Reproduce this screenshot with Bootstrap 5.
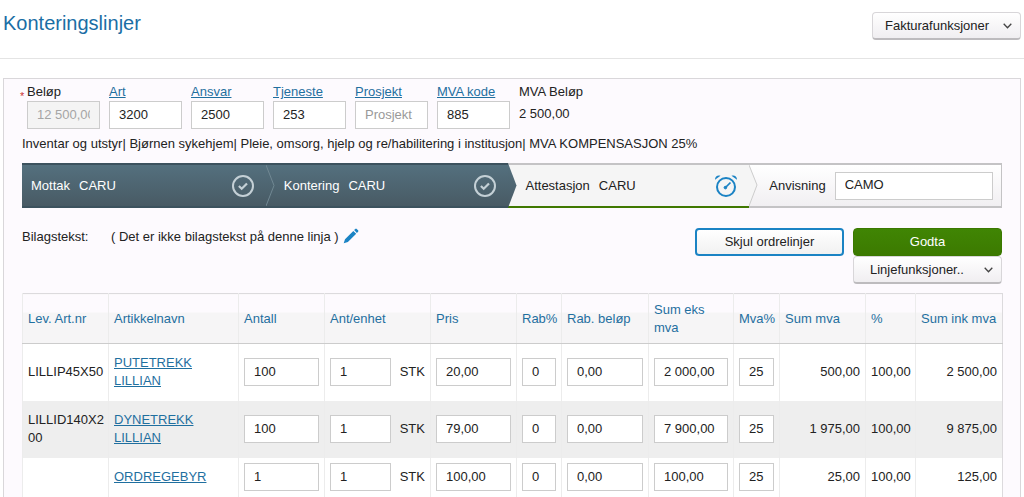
<!DOCTYPE html>
<html lang="no">
<head>
<meta charset="utf-8">
<meta name="viewport" content="width=device-width, initial-scale=1">
<title>Konteringslinjer</title>
<link href="https://cdn.jsdelivr.net/npm/bootstrap@5.3.0/dist/css/bootstrap.min.css" rel="stylesheet">
<style>
  body { font-family: "Liberation Sans", Arial, sans-serif; font-size: 13px; line-height: 18px; color: #222; background: #fff; }
  a { color: #1f6f9f; }
  .page-head { height: 59px; padding: 12px 3px 0; border-bottom: 1px solid #e4e4e4; }
  .page-title { font-size: 20px; line-height: 22px; color: #1a6ea5; font-weight: 400; }
  .panel { margin: 19px 3px 0; padding: 4px 18px 0; background: #fdfafe; border: 1px solid #d9d7da; border-bottom: 0; }
  .fields { padding-left: 5px; column-gap: 9px; }
  .field { width: 73px; }
  .field label, .caption { display: block; line-height: 18px; white-space: nowrap; }
  .form-control { font-size: 13px; line-height: 18px; height: 28px; padding: 3px 9px 5px; border-radius: 0; border-color: #ccc; color: #222; background: #fff; }
  .form-control:disabled { background: #f4f4f4; color: #a5a5a5; }
  .form-control::placeholder { color: #999; }
  .required { left: -7px; top: 4px; font-size: 11px; color: #c33; }
  .codes { margin-top: 6px; }
  .btn { font-size: 13px; line-height: 18px; height: 28px; padding: 3px 12px; border-radius: 4px; color: #222; }
  .btn-menu { width: 149px; padding-right: 8px; background: linear-gradient(#fff, #f0eef1); border: 1px solid #d8d6d9; border-bottom: 2px solid #bdbbbe; }
  .btn-toggle { width: 149px; background: linear-gradient(#fff, #f1f1f1); border: 2px solid #1b83c4; }
  .btn-accept { width: 149px; background: linear-gradient(#408504, #3c7a00); border: 1px solid #3b7800; color: #fff; }
  .steps { grid-template-columns: 244fr 242fr 242fr 252fr; height: 45px; margin-top: 10px; border: 1px solid #c4c3c5; border-width: 2px 1px 2px 0; background: linear-gradient(#fff, #f1eff2); }
  .step { gap: 9px; padding: 0 12px 0 18px; margin: -2px 0; min-width: 0; }
  .step:first-child { padding-left: 9px; }
  .step:last-child { padding: 0 8px 0 20px; }
  .step-done { color: #fff; background: linear-gradient(#54707e, #485a64); border: 1px solid #3c525e; border-width: 2px 0; }
  .step-now { background: #f5f5f5; border-top: 2px solid #c4c3c5; border-bottom: 2px solid #3f7800; }
  .tip { left: 100%; top: -2px; width: 9px; height: 45px; z-index: 1; }
  .step-now .tip { height: 43px; }
  .step-icon { width: 22px; height: 22px; }
  .actions { margin-top: 20px; }
  .note-label { width: 89px; }
  .side { margin-left: 9px; }
  .lines { table-layout: fixed; margin-top: 9px; border: 1px solid #dcdadd; background: #fff; }
  .lines th, .lines td { padding: 0 5px; border-left: 1px solid #ececec; vertical-align: middle; }
  .lines td:first-child { padding-right: 3px; word-break: break-all; }
  .lines th { height: 50px; font-weight: 400; color: #1f6f9f; border-bottom: 1px solid #ccc; background: linear-gradient(#fdfafe 36%, #f6f5f6 36%); }
  .lines td { height: 40px; }
  .lines .tall td { height: 57px; }
  .lines .shaded td { background: #eee; }
  .unit { gap: 9px; }
  .number { text-align: right; white-space: nowrap; }
</style>
</head>
<body>
<header class="page-head d-flex justify-content-between align-items-start">
  <h1 class="page-title m-0">Konteringslinjer</h1>
  <button type="button" class="btn btn-menu d-flex align-items-center justify-content-between">Fakturafunksjoner
    <svg width="9" height="6" viewBox="0 0 9 6" fill="none" stroke="#444" stroke-width="1.3" aria-hidden="true"><path d="M.7.8 4.5 4.8 8.3.8"/></svg></button>
</header>

<main class="panel">
  <form class="d-flex fields">
    <div class="field position-relative"><span class="required position-absolute" aria-hidden="true">*</span><label for="amount">Beløp</label><input class="form-control" id="amount" value="12 500,00" disabled></div>
    <div class="field"><label for="art"><a href="#art">Art</a></label><input class="form-control" id="art" value="3200"></div>
    <div class="field"><label for="ansvar"><a href="#ansvar">Ansvar</a></label><input class="form-control" id="ansvar" value="2500"></div>
    <div class="field"><label for="tjeneste"><a href="#tjeneste">Tjeneste</a></label><input class="form-control" id="tjeneste" value="253"></div>
    <div class="field"><label for="prosjekt"><a href="#prosjekt">Prosjekt</a></label><input class="form-control" id="prosjekt" placeholder="Prosjekt"></div>
    <div class="field"><label for="mvakode"><a href="#mvakode">MVA kode</a></label><input class="form-control" id="mvakode" value="885"></div>
    <div class="field"><span class="caption">MVA Beløp</span><div class="pt-1">2 500,00</div></div>
  </form>
  <div class="codes">Inventar og utstyr| Bjørnen sykehjem| Pleie, omsorg, hjelp og re/habilitering i institusjon| MVA KOMPENSASJON 25%</div>

  <div class="steps d-grid">
    <div class="step step-done position-relative d-flex align-items-center"><span>Mottak</span><span>CARU</span>
      <svg class="step-icon ms-auto" viewBox="0 0 22 22" fill="none" stroke="#c4d0d6" stroke-width="2" aria-hidden="true"><circle cx="11" cy="11" r="10"/><path d="m6.900 11 2.800 2.800 5.300-5.300" stroke-width="2.2"/></svg>
      <svg class="tip position-absolute" viewBox="0 0 9 45" aria-hidden="true"><path d="M0 2 8 22.500 0 43" fill="none" stroke="#718893"/></svg></div>
    <div class="step step-done position-relative d-flex align-items-center"><span>Kontering</span><span>CARU</span>
      <svg class="step-icon ms-auto" viewBox="0 0 22 22" fill="none" stroke="#c4d0d6" stroke-width="2" aria-hidden="true"><circle cx="11" cy="11" r="10"/><path d="m6.900 11 2.800 2.800 5.300-5.300" stroke-width="2.2"/></svg>
      <svg class="tip position-absolute" viewBox="0 0 9 45" aria-hidden="true"><defs><linearGradient id="slate" x2="0" y2="1"><stop stop-color="#54707e"/><stop offset="1" stop-color="#485a64"/></linearGradient></defs><path d="M0 0 8.500 22.500 0 45z" fill="url(#slate)"/></svg></div>
    <div class="step step-now position-relative d-flex align-items-center"><span>Attestasjon</span><span>CARU</span>
      <svg class="step-icon ms-auto" viewBox="0 0 22 22" fill="none" stroke="#1b83c4" stroke-width="2" aria-hidden="true"><circle cx="11" cy="12" r="9"/><path d="m10.500 12.500 5-5" stroke-width="1.700"/><circle cx="10.400" cy="12.600" r="1.300" fill="#1b83c4" stroke-width="1"/><path d="M0 4.800C-.2 1.800 2.500-.4 5.500.8zM22 4.800C22.200 1.800 19.500-.4 16.500.8z" fill="#1b83c4" stroke="none"/></svg>
      <svg class="tip position-absolute" viewBox="0 0 9 43" aria-hidden="true"><path d="M0 2 8 22 0 43z" fill="#f5f5f5"/><path d="M0 2 8 22 0 43" fill="none" stroke="#ccc"/></svg></div>
    <div class="step d-flex align-items-center"><label for="anvisning">Anvisning</label><input class="form-control" id="anvisning" value="CAMO"></div>
  </div>

  <div class="d-flex align-items-start actions">
    <span class="caption note-label">Bilagstekst:</span>
    <span class="caption">( Det er ikke bilagstekst på denne linja )</span>
    <a href="#bilagstekst" class="d-flex ms-1" aria-label="Rediger bilagstekst"><svg width="16" height="16" viewBox="0 0 16 16" fill="#1b83c4" aria-hidden="true"><path d="M.7 15.300 2 11.200 10.300 2.900 13.200 5.800 4.900 14zM11.100 2.100 12.300.9q.7-.6 1.400 0l1.400 1.400q.6.700 0 1.400L13.900 5z"/></svg></a>
    <button type="button" class="btn btn-toggle ms-auto">Skjul ordrelinjer</button>
    <div class="d-flex flex-column side">
      <button type="button" class="btn btn-accept">Godta</button>
      <button type="button" class="btn btn-menu d-flex align-items-center justify-content-between"><span class="ps-1">Linjefunksjoner..</span>
        <svg width="9" height="6" viewBox="0 0 9 6" fill="none" stroke="#444" stroke-width="1.3" aria-hidden="true"><path d="M.7.8 4.500 4.800 8.300.8"/></svg></button>
    </div>
  </div>

  <table class="lines w-100">
    <colgroup><col width="86"><col width="130"><col width="86"><col width="106"><col width="86"><col width="45"><col width="87"><col width="85"><col width="46"><col width="86"><col width="50"><col width="87"></colgroup>
    <thead><tr><th>Lev. Art.nr</th><th>Artikkelnavn</th><th>Antall</th><th>Ant/enhet</th><th>Pris</th><th>Rab%</th><th>Rab. beløp</th><th>Sum eks mva</th><th>Mva%</th><th>Sum mva</th><th>%</th><th class="text-nowrap">Sum ink mva</th></tr></thead>
    <tbody>
      <tr class="tall"><td>LILLIP45X50</td><td><a href="#1">PUTETREKK<br>LILLIAN</a></td>
        <td><input class="form-control" aria-label="Antall" value="100"></td>
        <td><div class="d-flex align-items-center unit"><input class="form-control" aria-label="Ant/enhet" value="1">STK</div></td>
        <td><input class="form-control" aria-label="Pris" value="20,00"></td>
        <td><input class="form-control" aria-label="Rab%" value="0"></td>
        <td><input class="form-control" aria-label="Rab. beløp" value="0,00"></td>
        <td><input class="form-control" aria-label="Sum eks mva" value="2 000,00"></td>
        <td><input class="form-control" aria-label="Mva%" value="25"></td>
        <td class="number">500,00</td><td class="number">100,00</td><td class="number">2 500,00</td></tr>
      <tr class="tall shaded"><td>LILLID140X200</td><td><a href="#2">DYNETREKK<br>LILLIAN</a></td>
        <td><input class="form-control" aria-label="Antall" value="100"></td>
        <td><div class="d-flex align-items-center unit"><input class="form-control" aria-label="Ant/enhet" value="1">STK</div></td>
        <td><input class="form-control" aria-label="Pris" value="79,00"></td>
        <td><input class="form-control" aria-label="Rab%" value="0"></td>
        <td><input class="form-control" aria-label="Rab. beløp" value="0,00"></td>
        <td><input class="form-control" aria-label="Sum eks mva" value="7 900,00"></td>
        <td><input class="form-control" aria-label="Mva%" value="25"></td>
        <td class="number">1 975,00</td><td class="number">100,00</td><td class="number">9 875,00</td></tr>
      <tr><td></td><td><a href="#3">ORDREGEBYR</a></td>
        <td><input class="form-control" aria-label="Antall" value="1"></td>
        <td><div class="d-flex align-items-center unit"><input class="form-control" aria-label="Ant/enhet" value="1">STK</div></td>
        <td><input class="form-control" aria-label="Pris" value="100,00"></td>
        <td><input class="form-control" aria-label="Rab%" value="0"></td>
        <td><input class="form-control" aria-label="Rab. beløp" value="0,00"></td>
        <td><input class="form-control" aria-label="Sum eks mva" value="100,00"></td>
        <td><input class="form-control" aria-label="Mva%" value="25"></td>
        <td class="number">25,00</td><td class="number">100,00</td><td class="number">125,00</td></tr>
    </tbody>
  </table>
</main>
<script src="https://cdn.jsdelivr.net/npm/bootstrap@5.3.0/dist/js/bootstrap.bundle.min.js"></script>
</body>
</html>
